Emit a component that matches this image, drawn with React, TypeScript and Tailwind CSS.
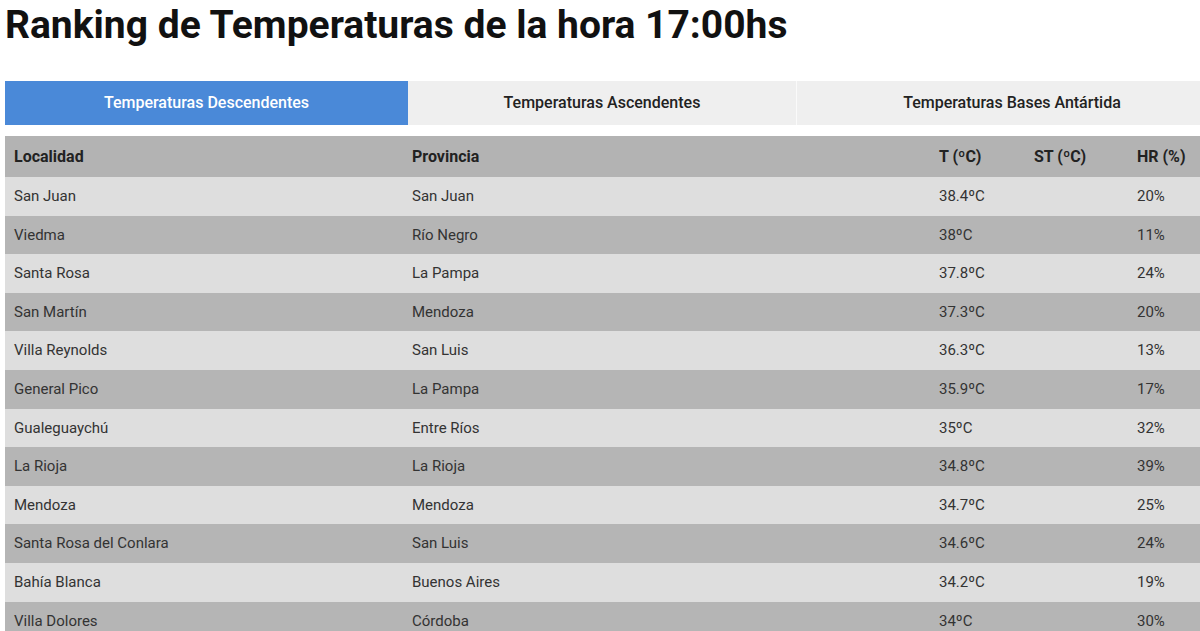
const rows: [string, string, string, string][] = [
  ["San Juan", "San Juan", "38.4ºC", "20%"],
  ["Viedma", "Río Negro", "38ºC", "11%"],
  ["Santa Rosa", "La Pampa", "37.8ºC", "24%"],
  ["San Martín", "Mendoza", "37.3ºC", "20%"],
  ["Villa Reynolds", "San Luis", "36.3ºC", "13%"],
  ["General Pico", "La Pampa", "35.9ºC", "17%"],
  ["Gualeguaychú", "Entre Ríos", "35ºC", "32%"],
  ["La Rioja", "La Rioja", "34.8ºC", "39%"],
  ["Mendoza", "Mendoza", "34.7ºC", "25%"],
  ["Santa Rosa del Conlara", "San Luis", "34.6ºC", "24%"],
  ["Bahía Blanca", "Buenos Aires", "34.2ºC", "19%"],
  ["Villa Dolores", "Córdoba", "34ºC", "30%"],
];

const cols = "grid grid-cols-[398px_527px_95px_103px_1fr]";

export default function App() {
  return (
    <div className="w-[1200px] h-[631px] overflow-hidden bg-white font-['Roboto',sans-serif] text-[#333]">
      <h1 className="pl-[5px] pt-[2px] h-[81px] text-[39px] leading-[46px] font-bold text-[#111] whitespace-nowrap">
        Ranking de Temperaturas de la hora 17:00hs
      </h1>
      <div className="ml-[5px] flex h-[44px] text-[16px] font-medium w-[1222px]">
        <div className="w-[403px] flex items-center justify-center bg-[#4a89d8] text-white">
          Temperaturas Descendentes
        </div>
        <div className="w-[389px] flex items-center justify-center bg-[#efefef] text-[#222] border-r border-[#fafafa]">
          Temperaturas Ascendentes
        </div>
        <div className="flex-1 flex items-center justify-center bg-[#efefef] text-[#222]">
          Temperaturas Bases Antártida
        </div>
      </div>
      <div className="ml-[5px] mt-[11px] text-[15px]">
        <div className={`${cols} h-[41px] items-center bg-[#b3b3b3] font-bold text-[#222] text-[16px]`}>
          <div className="pl-[9px]">Localidad</div>
          <div className="pl-[9px]">Provincia</div>
          <div className="pl-[9px]">T (ºC)</div>
          <div className="pl-[9px]">ST (ºC)</div>
          <div className="pl-[9px]">HR (%)</div>
        </div>
        {rows.map((r, i) => (
          <div
            key={i}
            className={`${cols} h-[38.6px] items-center ${i % 2 === 0 ? "bg-[#dedede]" : "bg-[#b5b5b5]"}`}
          >
            <div className="pl-[9px]">{r[0]}</div>
            <div className="pl-[9px]">{r[1]}</div>
            <div className="pl-[9px]">{r[2]}</div>
            <div className="pl-[9px]"></div>
            <div className="pl-[9px]">{r[3]}</div>
          </div>
        ))}
      </div>
    </div>
  );
}
